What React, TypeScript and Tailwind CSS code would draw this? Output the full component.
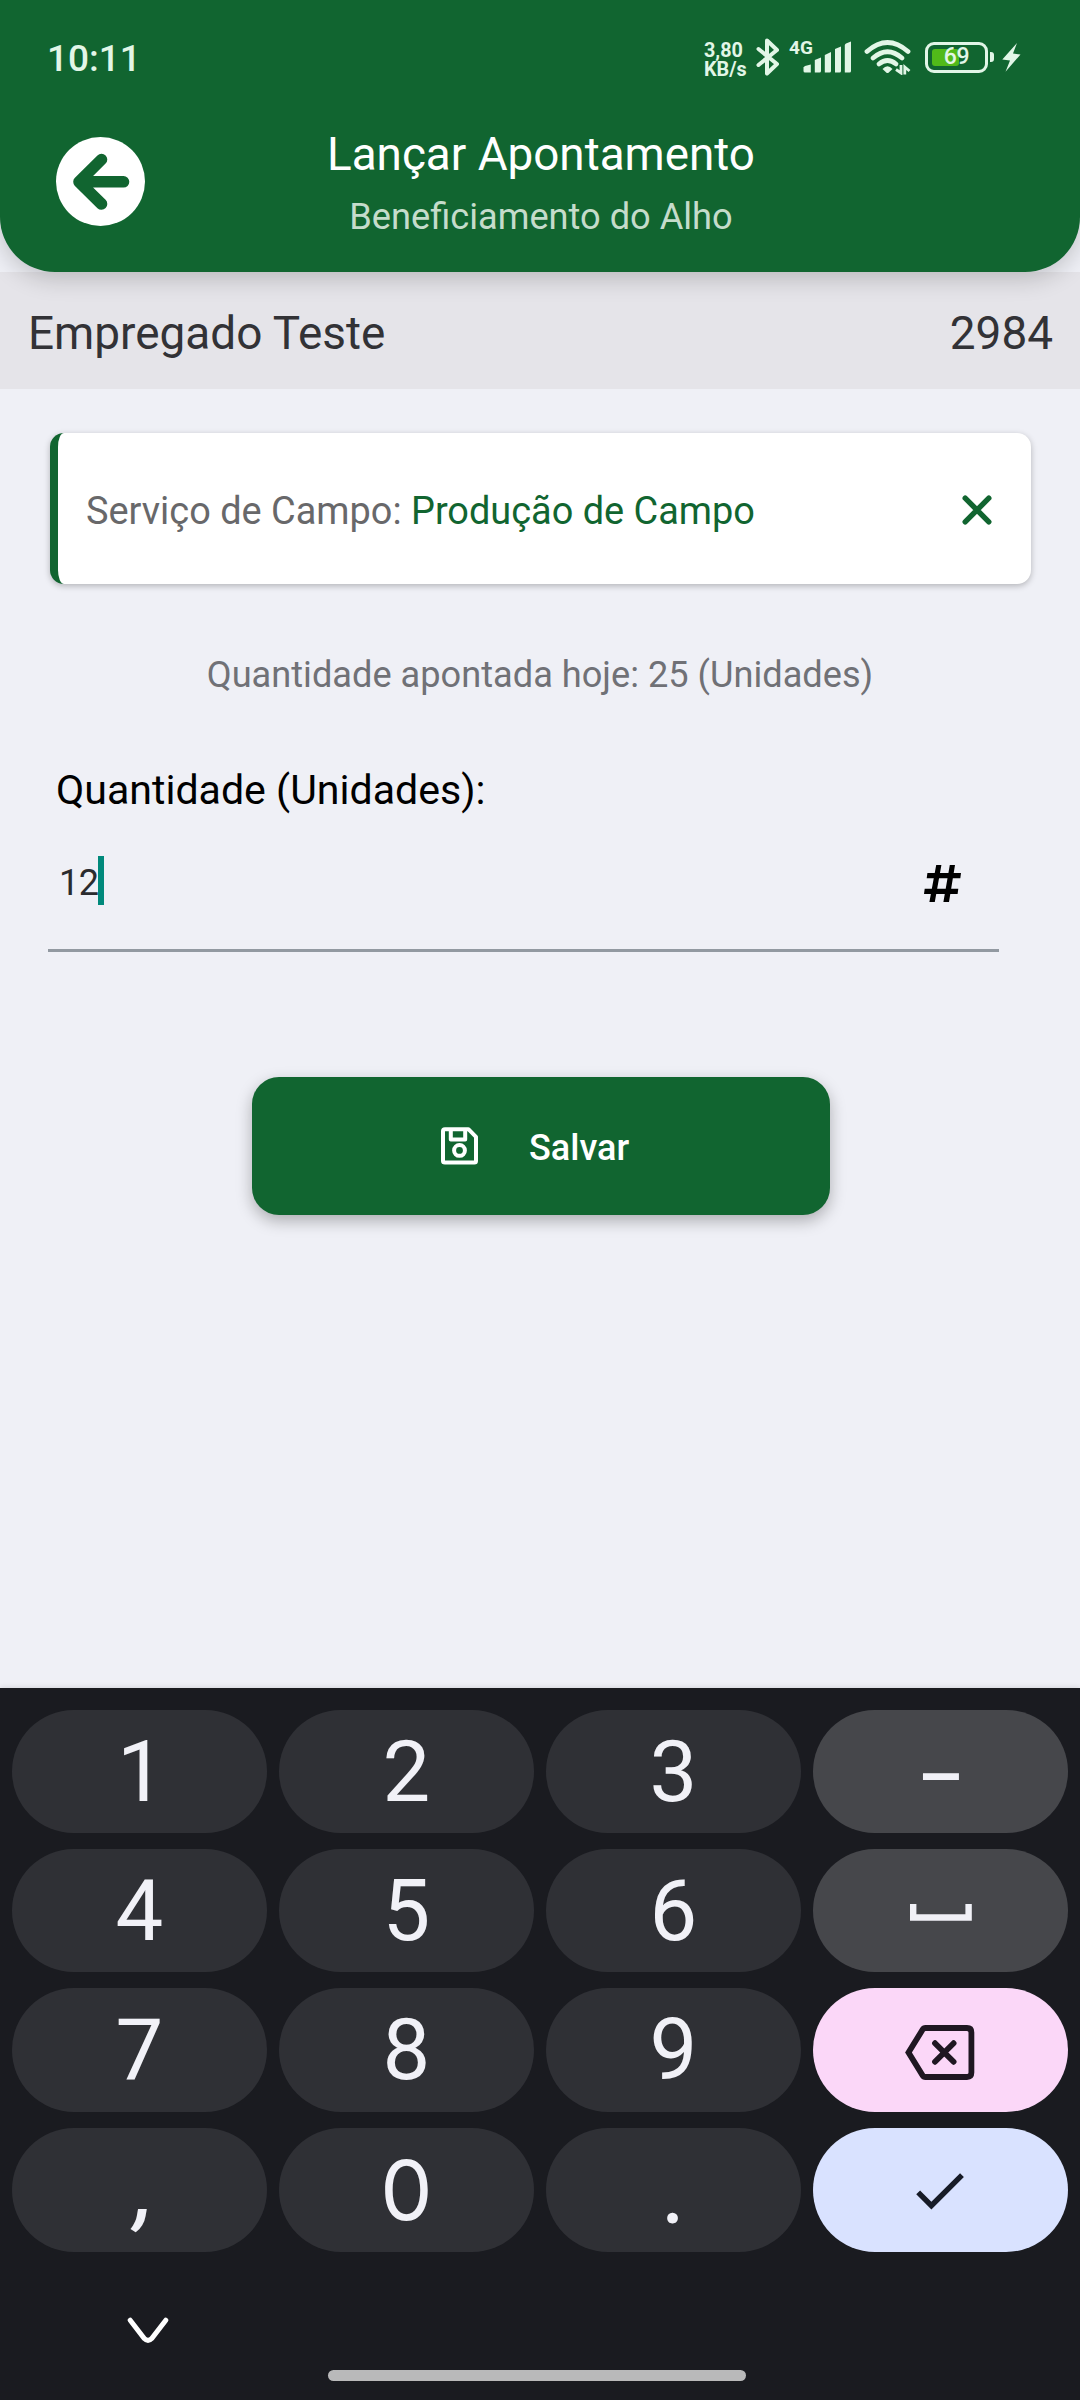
import type { ReactNode } from 'react';

type KeyDef = {
  id: string;
  content: ReactNode;
  className: string;
};

const DIGIT = 'bg-[#2f3035]';
const ACTION = 'bg-[#46474b]';

function StatusIcons() {
  return (
    <div className="flex items-center pb-[4px]">
      <p className="w-[46px] pt-[5px] text-[19.8px] leading-[19px] font-bold">
        3,80
        <br />
        KB/s
      </p>
      <svg className="ml-[5px]" width="26" height="40" viewBox="0 0 26 40" fill="none" stroke="currentColor" strokeWidth="4" strokeLinecap="round" strokeLinejoin="round">
        <path d="M3.5 12 L22 27 L12 36.5 V3.5 L22 13 L3.5 28" />
      </svg>
      {/* Mobile network */}
      <div className="relative ml-[8px] h-[40px] w-[64px]">
        <span className="absolute left-0 top-[1px] text-[19px] leading-[20px] font-bold">4G</span>
        <svg className="absolute left-[14px] top-[4px]" width="50" height="32" viewBox="0 0 50 32" fill="currentColor">
          <path d="M0.5 26.5 Q1 25.5 2 25 L7.8 23.5 V31.5 H2 Q0.5 31.5 0.5 30 Z" />
          <path d="M11.8 19 L18 16.5 V30 Q18 31.5 16.5 31.5 H11.8 Z" />
          <path d="M21.8 14 L28 11 V30 Q28 31.5 26.5 31.5 H21.8 Z" />
          <path d="M32 8 L38 5.5 V30 Q38 31.5 36.5 31.5 H32 Z" />
          <path d="M41.8 4 Q42 3 43 2.5 L48 0.5 V30 Q48 31.5 46.5 31.5 H41.8 Z" />
        </svg>
      </div>
      {/* Wi-Fi */}
      <svg className="ml-[9px]" width="50" height="36" viewBox="0 0 50 36" fill="none" stroke="currentColor">
        <g strokeWidth="4.8" strokeLinecap="round">
          <path d="M5 12.5 Q25.5 -5.5 46 12.5" />
          <path d="M11 19 Q25.5 6.5 40 19" />
          <path d="M17 25 Q25.5 18 34 25" />
        </g>
        <path fill="currentColor" stroke="none" d="M20.5 30 Q25.5 24.5 30.5 30 L26.8 33.6 Q25.5 34.6 24.2 33.6 Z" />
        <g strokeWidth="2.8">
          <path d="M39 26 V34 L34 30.5" />
          <path d="M42.8 35.5 V28 L47.5 32" />
        </g>
      </svg>
      {/* Battery */}
      <div className="relative ml-[13px] h-[31px] w-[63px] rounded-[9px] border-3 border-current p-[4px]">
        <div className="h-full w-[27px] rounded-[3px] bg-[#51ba19]" />
        <span className="absolute inset-0 flex items-center justify-center text-[23px] leading-[22px] font-medium tracking-[-0.3px]">
          69
        </span>
      </div>
      <div className="ml-[2px] h-[10px] w-[4px] rounded-r-[3px] bg-current" />
      <svg className="ml-[8px]" width="19" height="29" viewBox="0 0 19 29" fill="currentColor">
        <path d="M15 0 L0.3 16.5 L8 17.5 L3.5 28.7 L18.5 11.5 L11 10.5 Z" />
      </svg>
    </div>
  );
}

function Header() {
  return (
    <header className="relative z-10 h-[272px] shrink-0 rounded-b-[55px] bg-[#116530] shadow-[0_6px_24px_rgba(0,0,0,0.2)]">
      <div className="flex h-[118px] items-center justify-between pl-[47px] pr-[59px] text-[#e2f6e7]">
        <span className="text-[37px] font-medium leading-[44px]">10:11</span>
        <StatusIcons />
      </div>
      <div className="flex items-start px-[56px]">
        <button type="button" aria-label="Voltar" className="mt-[19px] size-[89px] shrink-0">
          <svg width="89" height="89" viewBox="0 0 89 89" fill="none">
            <circle cx="44.5" cy="44.5" r="44.5" fill="#fff" />
            <path
              d="M45.5 22.5 L23 44.8 L45.5 67 M23 44.8 H67.5"
              stroke="#116530"
              strokeWidth="11.6"
              strokeLinecap="round"
              strokeLinejoin="round"
            />
          </svg>
        </button>
        <div className="mt-[6px] flex flex-1 flex-col items-center">
          <h1 className="text-[45.8px] leading-[62px] text-white">Lançar Apontamento</h1>
          <p className="text-[36.2px] leading-[62px] text-[#c5dccb]">Beneficiamento do Alho</p>
        </div>
        <div className="w-[87px] shrink-0" />
      </div>
    </header>
  );
}

function ServiceCard() {
  return (
    <div className="ml-[50px] mr-[49px] mt-[44px] flex h-[151px] items-center justify-between rounded-[14px] border-l-8 border-[#116530] bg-white pl-[28px] pr-[39px] shadow-[0_2px_6px_rgba(0,0,0,0.25)]">
      <p className="pt-[4px] text-[37.9px] leading-[48px] text-[#68686a]">
        Serviço de Campo: <span className="text-[#116530]">Produção de Campo</span>
      </p>
      <button type="button" aria-label="Remover serviço" className="pt-[2px]">
        <svg width="30" height="30" viewBox="0 0 30 30" stroke="#116530" strokeWidth="5.4" strokeLinecap="round">
          <path d="M3.2 3.2 L26.8 26.8 M26.8 3.2 L3.2 26.8" />
        </svg>
      </button>
    </div>
  );
}

function QuantityField() {
  return (
    <div className="mt-[63px] ml-[48px] w-[951px]">
      <label className="block pl-[8px] text-[41.1px] leading-[56px] text-black">Quantidade (Unidades):</label>
      <div className="flex h-[134px] items-center justify-between border-b-3 border-[#9299a1] pl-[11px] pr-[38px]">
        <div className="flex items-center pb-[2px]">
          <span className="text-[36px] leading-[48px] tracking-[-0.5px] text-[#2a2b2e]">12</span>
          <span className="-mt-[4px] h-[49px] w-[6px] bg-[#00897b]" />
        </div>
        <svg width="37" height="37" viewBox="0 0 37 37" fill="#000">
          <path d="M3.4 8 H37 L36.3 13.2 H2.7 Z M0.7 23.8 H34.3 L33.6 29 H0 Z M12.2 0 H17.4 L10.8 37 H5.4 Z M25.8 0 H31 L25 37 H19.4 Z" />
        </svg>
      </div>
    </div>
  );
}

function SaveButton() {
  return (
    <button
      type="button"
      className="ml-[252px] mt-[125px] flex h-[138px] w-[578px] items-center rounded-[27px] bg-[#116530] pl-[189px] text-white shadow-[0_6px_16px_rgba(0,0,0,0.28)]"
    >
      <svg width="37" height="38" viewBox="0 0 37 38" fill="none" stroke="currentColor" strokeWidth="4">
        <path d="M4 2.2 H27.4 L35 9.8 V34 Q35 35.6 33.4 35.6 H4 Q2 35.6 2 34 V4 Q2 2.2 4 2.2 Z" strokeLinejoin="round" />
        <path d="M9.8 2.2 V12.6 H24.2 V2.2" strokeLinejoin="round" />
        <circle cx="18.5" cy="23.4" r="5.4" />
      </svg>
      <span className="ml-[51px] pt-[4px] text-[36px] leading-[48px] font-medium">Salvar</span>
    </button>
  );
}

function SpaceIcon() {
  return (
    <svg className="mt-[3px]" width="62" height="17" viewBox="0 0 62 17" fill="none" stroke="#f1f1f7" strokeWidth="6.4">
      <path d="M3.2 0 V13.5 H58.6 V0" />
    </svg>
  );
}

function BackspaceIcon() {
  return (
    <svg className="ml-[-2px] mt-[4px]" width="70" height="55" viewBox="0 0 70 55" fill="none" stroke="#1f1722" strokeWidth="5.8">
      <path d="M20.5 3 H62 Q66.4 3 66.4 7.4 V47.6 Q66.4 52 62 52 H20.5 Q18.6 52 17.5 50.2 L3.5 27.5 L17.5 4.8 Q18.6 3 20.5 3 Z" />
      <path d="M30 18.2 L48.6 36.8 M48.6 18.2 L30 36.8" strokeLinecap="round" />
    </svg>
  );
}

function CheckIcon() {
  return (
    <svg className="mr-[2px]" width="65" height="65" viewBox="0 0 24 24" fill="#171b27">
      <path d="M9 16.17 4.83 12l-1.42 1.41L9 19 21 7l-1.41-1.41z" />
    </svg>
  );
}

const KEYS: KeyDef[] = [
  { id: '1', content: <span className="pl-[3px]">1</span>, className: DIGIT },
  { id: '2', content: '2', className: DIGIT },
  { id: '3', content: '3', className: DIGIT },
  { id: 'minus', content: <span className="pt-[13px] text-[72px] font-medium">–</span>, className: ACTION },
  { id: '4', content: '4', className: DIGIT },
  { id: '5', content: '5', className: DIGIT },
  { id: '6', content: '6', className: DIGIT },
  { id: 'space', content: <SpaceIcon />, className: ACTION },
  { id: '7', content: '7', className: DIGIT },
  { id: '8', content: '8', className: DIGIT },
  { id: '9', content: '9', className: DIGIT },
  { id: 'backspace', content: <BackspaceIcon />, className: 'bg-[#fbd7f8]' },
  { id: 'comma', content: <span className="pl-[10px] font-medium italic">,</span>, className: DIGIT },
  { id: '0', content: <span className="font-[Inter] text-[83px]">0</span>, className: DIGIT },
  { id: 'dot', content: <span className="pr-[2px] font-[Lato]">.</span>, className: DIGIT },
  { id: 'done', content: <CheckIcon />, className: 'bg-[#d9e2ff]' },
];

function Keyboard() {
  return (
    <div className="flex h-[712px] shrink-0 flex-col bg-[#1a1b20] shadow-[0_-1px_5px_rgba(0,0,0,0.1)]">
      <div className="grid grid-cols-4 grid-rows-[123px_123px_124px_124px] gap-x-3 gap-y-4 px-3 pt-[22px]">
        {KEYS.map((key) => (
          <button
            key={key.id}
            type="button"
            className={`flex items-center justify-center rounded-full text-[85px] leading-[100px] text-[#f1f1f7] ${key.className}`}
          >
            {key.content}
          </button>
        ))}
      </div>
      <div className="pl-[127px] pt-[65px]">
        <svg width="42" height="27" viewBox="0 0 42 27" fill="none" stroke="#fff" strokeWidth="5" strokeLinecap="round">
          <path d="M3.2 3.2 L17.3 21.5 Q21 25.2 24.7 21.5 L38.8 3.2" />
        </svg>
      </div>
      <div className="mb-[19px] ml-[328px] mt-auto h-[11px] w-[418px] rounded-full bg-[#b9b9ba]" />
    </div>
  );
}

export default function App() {
  return (
    <div className="flex h-[2400px] w-[1080px] flex-col overflow-hidden bg-[#eff0f6] font-[Roboto,sans-serif]">
      <Header />
      <main className="flex flex-1 flex-col">
        <div className="flex h-[117px] shrink-0 items-center justify-between bg-[#e5e4e9] pl-[28px] pr-[27px] pt-[4px] text-[45.9px] leading-[60px] text-[#323236]">
          <span>Empregado Teste</span>
          <span>2984</span>
        </div>
        <ServiceCard />
        <p className="mt-[67px] text-center text-[36.2px] leading-[48px] text-[#707176]">
          Quantidade apontada hoje: 25 (Unidades)
        </p>
        <QuantityField />
        <SaveButton />
      </main>
      <Keyboard />
    </div>
  );
}
